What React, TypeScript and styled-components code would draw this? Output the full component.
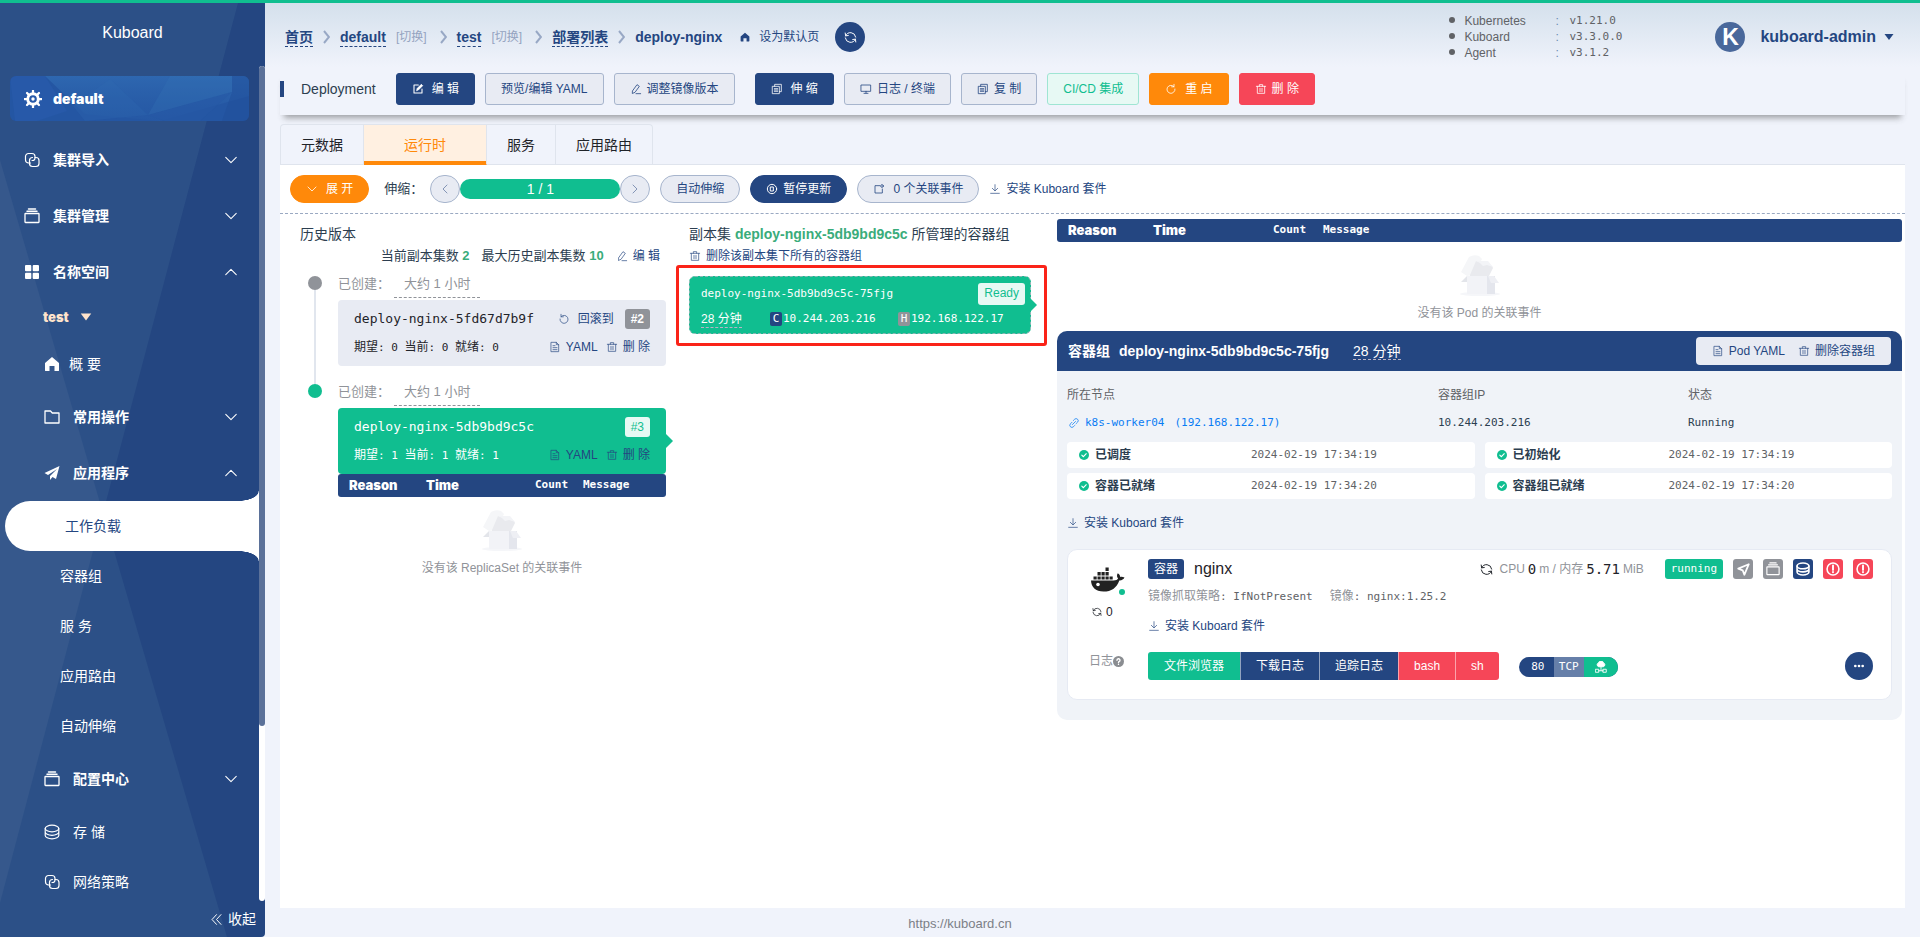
import React from 'react';
import styled, { createGlobalStyle, css } from 'styled-components';

const c = {
  navy: '#244681',
  green: '#10be90',
  orange: '#ff890a',
  red: '#f64658',
  gray: '#909399',
  page: '#f0f3fb',
  soft: '#e8ebf3',
  line: '#a7b5cd',
  text: '#2c3e50',
  dark: '#1f2329',
};
const sans = '"Liberation Sans", "Noto Sans CJK SC", sans-serif';
const mono = '"DejaVu Sans Mono", "Noto Sans CJK SC", monospace';
const heavy = '"Inter", "Noto Sans CJK SC", sans-serif';

const GlobalStyle = createGlobalStyle`
  *, *::before, *::after { box-sizing: border-box; }
  body { margin: 0; background: ${c.page}; color: ${c.text}; font: 12px/20px ${sans}; }
  button { font: inherit; color: inherit; cursor: pointer; }
  a { color: inherit; text-decoration: none; }
  ul, dl, dd, dt, h1, h2, h3, p { margin: 0; padding: 0; list-style: none; font: inherit; }
`;

/* ---------- icons ---------- */

const Glyph = styled.svg<{ $s?: number }>`
  flex: none;
  display: block;
  width: ${(p) => p.$s ?? 12}px;
  height: ${(p) => p.$s ?? 12}px;
  fill: none;
  stroke: currentColor;
  stroke-width: 1.2;
  stroke-linecap: round;
  stroke-linejoin: round;
`;

const shapes: Record<string, React.ReactNode> = {
  down: <path d="M2 5l6 6 6-6" />,
  up: <path d="M2 11l6-6 6 6" />,
  left: <path d="M11 2L5 8l6 6" />,
  right: <path d="M5 2l6 6-6 6" />,
  caret: <path d="M2 4h12l-6 8z" fill="currentColor" stroke="none" />,
  dleft: <path d="M8 2L2.500 8 8 14M13.500 2L8 8l5.500 6" />,
  link2: (
    <>
      <path d="M6.500 11H4.500A3 3 0 0 1 1.500 8V4.500a3 3 0 0 1 3-3H8a3 3 0 0 1 3 3v1.500a2.500 2.500 0 0 1-2.500 2.500H8" />
      <path d="M5.500 10.500V8.500a3 3 0 0 1 3-3M11 5.500h1a3 3 0 0 1 3 3v3a3 3 0 0 1-3 3H8.500a3 3 0 0 1-3-3v-1" />
    </>
  ),
  stack: (
    <>
      <path d="M4.500 1h7M3 3.200h10" strokeWidth="1.500" />
      <rect x="1" y="5.500" width="14" height="9" rx=".5" strokeWidth="1.300" />
    </>
  ),
  grid: (
    <g fill="currentColor" stroke="none">
      <rect x="1" y="1" width="6.300" height="6.300" rx="1" />
      <rect x="8.700" y="1" width="6.300" height="6.300" rx="1" />
      <rect x="1" y="8.700" width="6.300" height="6.300" rx="1" />
      <rect x="8.700" y="8.700" width="6.300" height="6.300" rx="1" />
    </g>
  ),
  home: (
    <path d="M8 1l7 6v7.500a.8.800 0 0 1-.8.500H10.500V10h-5v5H1.800a.8.800 0 0 1-.8-.5V7z" fill="currentColor" stroke="none" />
  ),
  folder: <path d="M1 2h5.500l1.800 2H15v10H1z" strokeWidth="1.300" />,
  plane: <path d="M15.500 1L.5 8l3.500 2L13 4 6 11v4l2.500-3 3.500 2z" fill="currentColor" stroke="none" />,
  coin: (
    <>
      <ellipse cx="8" cy="4.500" rx="6.800" ry="3.300" />
      <path d="M1.200 4.500V8c0 1.800 3 3.300 6.800 3.300s6.800-1.500 6.800-3.300V4.500M1.200 8v3.500c0 1.800 3 3.300 6.800 3.300s6.800-1.500 6.800-3.300V8" />
    </>
  ),
  edit: (
    <>
      <path d="M8.500 2H2v12h12V8" strokeWidth="1.600" />
      <path d="M6 10l1-3 6-6 2 2-6 6z" fill="currentColor" />
    </>
  ),
  pen: <path d="M3 10.500L9.500 1.500l3.500 2.500-6.500 9-3.500 1.500zM8 15h7" />,
  copy: (
    <>
      <path d="M4.500 4V1h10v11h-3" />
      <path d="M1.500 4h10v11h-10zM4 7.500h5M4 9.500h5M4 11.500h5" />
    </>
  ),
  monitor: <path d="M1 2h14v9.500H1zM8 11.500v2.500M5 14.500h6" />,
  redo: <path d="M12.500 4.500A6 6 0 1 0 14 8M12.500 1v3.700H9" />,
  undo: <path d="M3.500 4.500A6 6 0 1 1 2 8M3.500 1v3.700H7" />,
  trash: <path d="M1 4h14M5.500 4V1.500h5V4M2.500 4v10.500h11V4M6.500 7v5M9.500 7v5" />,
  sync: <path d="M2 6A6.500 6.500 0 0 1 14.400 7.500M14 10A6.500 6.500 0 0 1 1.600 8.500M1.500 2.500L2 6l3.300-.5M14.500 13.500L14 10l-3.300.5" />,
  pause: (
    <>
      <circle cx="8" cy="8" r="7" strokeWidth="1.500" />
      <path d="M6 5h4v6H6z" strokeWidth="1.500" />
    </>
  ),
  event: (
    <>
      <path d="M9 3H2v11h11V8" />
      <circle cx="12.500" cy="3.500" r="2" />
    </>
  ),
  download: <path d="M8 1.500v9M4 7l4 4 4-4M1.500 14.500h13" />,
  doc: <path d="M2.500 1h7.500l3.500 3.500V15h-11zM10 1v3.500h3.500M5 6h3M5 9h6M5 12h6" />,
  link: <path d="M7 4l2-2a3.300 3.300 0 0 1 4.700 4.700l-2.500 2.500M9 12l-2 2a3.300 3.300 0 0 1-4.700-4.700l2.500-2.500M5.500 10.500l5-5" />,
  check: (
    <>
      <circle cx="8" cy="8" r="7.500" fill={c.green} stroke="none" />
      <path d="M4.700 8.200l2.400 2.400 4.300-4.500" stroke="#fff" strokeWidth="1.700" />
    </>
  ),
  help: (
    <>
      <circle cx="8" cy="8" r="8" fill="#8a8d91" stroke="none" />
      <path d="M5.800 6.300a2.200 2.200 0 1 1 3 2c-.6.300-.8.700-.8 1.300M8 12v.2" stroke="#fff" strokeWidth="2" />
    </>
  ),
  nav: <path d="M14.500 1.500L1.500 7l5.500 2 2 5.500z" strokeWidth="2.200" />,
  warn: (
    <>
      <circle cx="8" cy="8" r="6.800" strokeWidth="1.800" />
      <path d="M8 4v5M8 11.500v.3" strokeWidth="2.200" />
    </>
  ),
  more: (
    <g fill="currentColor" stroke="none">
      <circle cx="2.500" cy="8" r="2" />
      <circle cx="8" cy="8" r="2" />
      <circle cx="13.500" cy="8" r="2" />
    </g>
  ),
  cloud: (
    <>
      <path d="M4.500 7.500a2.700 2.700 0 0 1 0-5 3.700 3.700 0 0 1 7 0 2.700 2.700 0 0 1 0 5z" fill="currentColor" />
      <path d="M8 7.500v5M5 13h6" />
      <rect x="1" y="11" width="4" height="4" />
      <rect x="11" y="11" width="4" height="4" />
    </>
  ),
  helm: (
    <>
      <circle cx="8" cy="8" r="4.700" strokeWidth="2.600" />
      <circle cx="8" cy="8" r="1.500" fill="currentColor" stroke="none" />
      <path d="M8 .5v2M8 13.500v2M.5 8h2M13.500 8h2M2.700 2.700l1.400 1.400M11.900 11.900l1.400 1.400M13.300 2.700l-1.400 1.400M4.100 11.900l-1.400 1.400" strokeWidth="2" />
    </>
  ),
};

const Icon = ({ n, s }: { n: string; s?: number }) => (
  <Glyph viewBox={s ? '0 0 16 16' : '-1 -1 18 18'} $s={s} aria-hidden="true">
    {shapes[n]}
  </Glyph>
);

/* ---------- shell ---------- */

const Shell = styled.div`
  display: grid;
  grid-template: 1fr 29px / 265px minmax(0, 1fr);
  min-height: 100vh;
  border-top: 3px solid ${c.green};
`;

const Sidebar = styled.aside`
  grid-area: 1 / 1 / 3 / 2;
  position: relative;
  z-index: 1;
  display: flex;
  flex-direction: column;
  height: calc(100vh - 3px);
  overflow: hidden;
  border-radius: 0 0 4px 0;
  background: ${c.navy};
  color: #fff;
  font-size: 14px;
`;

const Facets = styled.svg`
  position: absolute;
  inset: 0;
  z-index: -1;
  width: 100%;
  height: 100%;
`;

const Brand = styled.a`
  flex: none;
  height: 63px;
  text-align: center;
  font-size: 16px;
  line-height: 60px;
`;

const ScrollArea = styled.nav`
  flex: 1;
  min-height: 0;
  display: flex;
`;

const Menu = styled.ul`
  flex: 1;
  height: 100%;
  overflow: hidden;
  padding-top: 10px;
`;

const Track = styled.div`
  width: 6px;
  border-radius: 3px;
  background: #fff;
  &::before {
    content: '';
    display: block;
    height: 79%;
    border-radius: 3px;
    background: #5b7199;
  }
`;

const Cluster = styled.a`
  position: relative;
  display: flex;
  align-items: center;
  gap: 11px;
  height: 45px;
  margin: 0 10px 11px;
  padding-left: 14px;
  border-radius: 6px;
  overflow: hidden;
  background: #2456a3;
  font: 900 14px/20px ${heavy};
  svg { z-index: 1; }
  span { z-index: 1; }
`;

const ClusterArt = styled.svg`
  position: absolute;
  inset: 0;
  width: 100%;
  height: 100%;
`;

const MenuLink = styled.a<{ $lvl: 1 | 2 | 3; $group?: boolean; $tight?: boolean }>`
  display: flex;
  align-items: center;
  gap: ${(p) => (p.$tight ? 9 : 13)}px;
  height: ${(p) => (p.$group ? 56 : 50)}px;
  padding: 0 21px 0 ${(p) => (p.$lvl === 1 ? 24 : p.$lvl === 2 ? 44 : 60)}px;
  font-weight: ${(p) => (p.$group ? 700 : 400)};
  > span { flex: 1; }
`;

const Namespace = styled.a`
  display: flex;
  align-items: center;
  gap: 10px;
  height: 34px;
  margin-bottom: 5px;
  padding-left: 43px;
  color: #ffe4cc;
  font: 900 13px/20px ${heavy};
`;

const ActiveLink = styled.a`
  position: relative;
  display: flex;
  align-items: center;
  height: 50px;
  margin-left: 5px;
  padding-left: 60px;
  border-radius: 25px 0 0 25px;
  background: #fff;
  color: ${c.navy};
  &::before, &::after {
    content: '';
    position: absolute;
    right: 0;
    width: 20px;
    height: 10px;
  }
  &::before {
    bottom: 100%;
    background: radial-gradient(ellipse 20px 10px at 0 0, transparent 96%, #fff 100%);
  }
  &::after {
    top: 100%;
    background: radial-gradient(ellipse 20px 10px at 0 100%, transparent 96%, #fff 100%);
  }
`;

const Collapse = styled.button`
  flex: none;
  display: flex;
  align-items: center;
  justify-content: flex-end;
  gap: 5px;
  height: 36px;
  padding: 0 9px 0 0;
  border: 0;
  background: none;
`;

type Entry = { label: string; icon?: string; lvl: 1 | 2 | 3; group?: 'down' | 'up'; tight?: boolean };
const menuTop: Entry[] = [
  { label: '集群导入', icon: 'link2', lvl: 1, group: 'down' },
  { label: '集群管理', icon: 'stack', lvl: 1, group: 'down' },
  { label: '名称空间', icon: 'grid', lvl: 1, group: 'up' },
];
const menuMid: Entry[] = [
  { label: '概 要', icon: 'home', lvl: 2, tight: true },
  { label: '常用操作', icon: 'folder', lvl: 2, group: 'down' },
  { label: '应用程序', icon: 'plane', lvl: 2, group: 'up' },
];
const menuEnd: Entry[] = [
  { label: '容器组', lvl: 3 },
  { label: '服 务', lvl: 3 },
  { label: '应用路由', lvl: 3 },
  { label: '自动伸缩', lvl: 3 },
  { label: '配置中心', icon: 'stack', lvl: 2, group: 'down' },
  { label: '存 储', icon: 'coin', lvl: 2 },
  { label: '网络策略', icon: 'link2', lvl: 2 },
];

const Entries = ({ items }: { items: Entry[] }) => (
  <>
    {items.map((m) => (
      <li key={m.label}>
        <MenuLink href="#" $lvl={m.lvl} $group={!!m.group} $tight={m.tight}>
          {m.icon && <Icon n={m.icon} s={16} />}
          <span>{m.label}</span>
          {m.group && <Icon n={m.group} s={14} />}
        </MenuLink>
      </li>
    ))}
  </>
);

/* ---------- header ---------- */

const Main = styled.main`
  grid-area: 1 / 2;
  display: flex;
  flex-direction: column;
  min-width: 0;
  padding: 0 15px;
  background: linear-gradient(#d4e0ec, ${c.page} 64px);
`;

const Header = styled.header`
  display: flex;
  align-items: center;
  height: 68px;
  padding: 0 10px 0 5px;
  color: ${c.navy};
`;

const Crumbs = styled.nav`
  display: flex;
  align-items: center;
  gap: 10px;
  font-size: 14px;
  font-weight: 700;
  line-height: 18px;
`;

const SeparatorArt = styled.svg`
  flex: none;
  width: 7px;
  height: 14px;
  fill: none;
  stroke: #98a8c5;
  stroke-width: 2;
`;

const Separator = () => (
  <SeparatorArt viewBox="0 0 7 14" aria-hidden="true">
    <path d="M1 1l5 6-5 6" />
  </SeparatorArt>
);

const Crumb = styled.a`
  border-bottom: 1px dashed ${c.navy};
`;

const Switch = styled.a`
  margin-right: 3px;
  color: #94a3c0;
  font-size: 12px;
  font-weight: 400;
`;

const SetDefault = styled.a`
  display: flex;
  align-items: center;
  gap: 9px;
  margin: 0 6px 0 8px;
  font-size: 12px;
  font-weight: 400;
`;

const Round = styled.button<{ $size: number }>`
  flex: none;
  display: grid;
  place-items: center;
  width: ${(p) => p.$size}px;
  height: ${(p) => p.$size}px;
  padding: 0;
  border: 0;
  border-radius: 50%;
  background: ${c.navy};
  color: #fff;
`;

const MoreButton = styled(Round)`
  margin-left: auto;
`;

const Versions = styled.dl`
  display: grid;
  grid-template-columns: 12px 91px 14px 146px;
  margin-left: auto;
  color: #606266;
  line-height: 16px;
  dd { font: 11px/16px ${mono}; }
  dt { display: contents; }
  dt::before {
    content: '';
    width: 6px;
    height: 6px;
    margin-top: 4px;
    margin-left: -3px;
    border-radius: 50%;
    background: #606266;
  }
  dt::after { content: ':'; color: #6b8bb0; }
`;

const User = styled.button`
  display: flex;
  align-items: center;
  gap: 7px;
  padding: 0;
  border: 0;
  background: none;
  color: ${c.navy};
  font-size: 16px;
  font-weight: 700;
`;

const Avatar = styled.span`
  width: 30px;
  height: 30px;
  margin-right: 8px;
  border-radius: 50%;
  background: #49689b;
  color: #fff;
  font-size: 23px;
  line-height: 30px;
  text-align: center;
`;

/* ---------- toolbar ---------- */

const tones = {
  navy: css`background: ${c.navy}; border-color: ${c.navy}; color: #fff;`,
  soft: css`background: ${c.soft}; border-color: ${c.line}; color: ${c.navy};`,
  mint: css`background: #e7f9f4; border-color: #9fe5d3; color: ${c.green};`,
  orange: css`background: ${c.orange}; border-color: ${c.orange}; color: #fff;`,
  red: css`background: ${c.red}; border-color: ${c.red}; color: #fff;`,
};
type Tone = keyof typeof tones;

const Button = styled.button<{ $tone: Tone; $gap?: number; $pill?: boolean }>`
  display: inline-flex;
  align-items: center;
  justify-content: center;
  gap: ${(p) => p.$gap ?? 5}px;
  height: ${(p) => (p.$pill ? 28 : 32)}px;
  padding: 0 15px;
  border: 1px solid;
  border-radius: ${(p) => (p.$pill ? 14 : 3)}px;
  white-space: nowrap;
  ${(p) => tones[p.$tone]}
`;

const Toolbar = styled.div`
  display: flex;
  align-items: center;
  gap: 10px;
  height: 44px;
  padding-bottom: 8px;
  box-shadow: 0 7px 6px -4px rgba(60, 60, 60, 0.45);
`;

const Kind = styled.h1`
  margin-right: 10px;
  padding-left: 17px;
  border-left: 4px solid ${c.navy};
  font-size: 14px;
  line-height: 16px;
`;

const Group = styled.div`
  display: flex;
  gap: 10px;
  & + & { margin-left: 10px; }
`;

const Tabs = styled.div`
  display: flex;
  margin-top: 9px;
  border-bottom: 1px solid #dfe4ed;
`;

const Tab = styled.button<{ $on?: boolean }>`
  height: 40px;
  margin: 0;
  padding: 0 20px;
  border: 1px solid #dfe4ed;
  border-width: 1px 1px 0 0;
  background: none;
  color: ${c.dark};
  font-size: 14px;
  &:first-child { border-left-width: 1px; border-top-left-radius: 4px; }
  &:last-child { border-top-right-radius: 4px; }
  ${(p) =>
    p.$on &&
    css`
      padding: 0 40px;
      background: #fff0e1;
      color: ${c.orange};
      box-shadow: inset 0 -3px ${c.orange};
      border-bottom: 1px solid ${c.orange};
      height: 41px;
      margin-bottom: -1px;
    `}
`;

const Panel = styled.section`
  flex: 1;
  background: #fff;
`;

const ScaleBar = styled.div`
  display: flex;
  align-items: center;
  gap: 10px;
  height: 49px;
  padding: 0 10px;
  border-bottom: 1px dashed #9aa9c2;
`;

const ScaleLabel = styled.span`
  width: 36px;
  margin-left: 5px;
  color: ${c.text};
  font-size: 13px;
  white-space: nowrap;
`;

const Scaler = styled.div`
  display: flex;
  align-items: center;
`;

const Step = styled.button`
  display: grid;
  place-items: center;
  width: 30px;
  height: 28px;
  padding: 0;
  border: 1px solid ${c.line};
  border-radius: 15px;
  background: ${c.soft};
  color: #6a7fa6;
`;

const Progress = styled.div`
  width: 160px;
  border-radius: 10px;
  background: ${c.green};
  color: #fff;
  font-size: 14px;
  line-height: 20px;
  text-align: center;
`;

const TextLink = styled.a<{ $gap?: number }>`
  display: inline-flex;
  align-items: center;
  gap: ${(p) => p.$gap ?? 5}px;
  color: ${c.navy};
  font-size: 12px;
  white-space: nowrap;
  svg { opacity: 0.85; }
`;

const LinkLine = styled.div<{ $h: number }>`
  display: flex;
  height: ${(p) => p.$h}px;
`;

/* ---------- three columns ---------- */

const Columns = styled.div`
  display: grid;
  grid-template-columns: 366fr 345fr 845fr;
  gap: 23px;
  padding: 5px 3px 0 20px;
`;

const Column = styled.div<{ $inset?: boolean }>`
  min-width: 0;
  padding-right: ${(p) => (p.$inset ? 3 : 0)}px;
`;

const Title = styled.h2`
  padding-top: 4px;
  color: ${c.text};
  font-size: 14px;
  line-height: 22px;
  white-space: nowrap;
`;

const Strong = styled.b`
  color: #3aac7b;
`;

const Limits = styled.div`
  display: flex;
  justify-content: flex-end;
  gap: 12px;
  padding-right: 6px;
  font-size: 13px;
  line-height: 22px;
  white-space: nowrap;
`;

const Timeline = styled.ul`
  padding-left: 8px;
  margin-top: 4px;
`;

const Moment = styled.li<{ $on?: boolean }>`
  position: relative;
  padding: 0 0 9px 30px;
  &::before {
    content: '';
    position: absolute;
    left: 0;
    top: 5px;
    width: 14px;
    height: 14px;
    border-radius: 50%;
    background: ${(p) => (p.$on ? c.green : c.gray)};
  }
  &:not(:last-child)::after {
    content: '';
    position: absolute;
    left: 6px;
    top: 19px;
    bottom: -5px;
    width: 2px;
    background: #e1e6ee;
  }
`;

const Created = styled.div`
  display: flex;
  height: 29px;
  color: ${c.gray};
  font-size: 13px;
  line-height: 26px;
  span { width: 56px; }
  time {
    height: 27px;
    padding: 0 10px;
    border-bottom: 1px dashed ${c.gray};
  }
`;

const Arrow = styled.span`
  position: absolute;
  left: 100%;
  top: 50%;
  margin-top: -7px;
  border: 7px solid transparent;
  border-left-color: ${c.green};
  border-right-width: 0;
`;

const SetCard = styled.article<{ $on?: boolean }>`
  position: relative;
  display: grid;
  grid-template: 28px 28px / 1fr auto;
  height: 66px;
  margin-bottom: ${(p) => (p.$on ? 0 : 4)}px;
  padding: 5px 16px;
  align-items: center;
  border-radius: 4px;
  background: ${(p) => (p.$on ? c.green : c.soft)};
  color: ${(p) => (p.$on ? '#fff' : c.dark)};
  white-space: nowrap;
`;

const SetName = styled.h3`
  font: 13px/20px ${mono};
`;

const CountLine = styled.p`
  font: 11px/20px ${mono};
  span { font-size: 12px; }
`;

const Counts = ({ n }: { n: number }) => (
  <CountLine>
    <span>期望</span>: {n} <span>当前</span>: {n} <span>就绪</span>: {n}
  </CountLine>
);

const Actions = styled.div<{ $gap?: number }>`
  display: flex;
  justify-content: flex-end;
  align-items: center;
  gap: ${(p) => p.$gap ?? 8}px;
`;

const Tag = styled.span<{ $tone: 'gray' | 'light' | 'navy' | 'green'; $mono?: boolean }>`
  flex: none;
  padding: 0 6px;
  border-radius: 3px;
  font: ${(p) => (p.$mono ? `11px/20px ${mono}` : `12px/20px ${sans}`)};
  font-weight: ${(p) => (p.$tone === 'gray' ? 700 : 400)};
  color: ${(p) => (p.$tone === 'light' ? c.green : '#fff')};
  background: ${(p) => ({ gray: c.gray, light: '#e7f9f4', navy: c.navy, green: c.green })[p.$tone]};
`;

const EventTable = styled.table<{ $cols: [number, number, number] }>`
  width: 100%;
  height: 23px;
  table-layout: fixed;
  border-collapse: separate;
  border-spacing: 0;
  border-radius: 3px;
  background: ${c.navy};
  color: #fff;
  text-align: left;
  th { padding: 0; font: 700 11px/21px ${mono}; vertical-align: top; }
  th:nth-child(-n + 2) { font: 900 13px/23px ${heavy}; }
  th:nth-child(1) { width: ${(p) => p.$cols[0] + 11}px; padding-left: 11px; }
  th:nth-child(2) { width: ${(p) => p.$cols[1]}px; }
  th:nth-child(3) { width: ${(p) => p.$cols[2]}px; }
`;

const Empty = styled.figure`
  display: flex;
  flex-direction: column;
  align-items: center;
  gap: 6px;
  margin: 0;
  padding: 13px 0 8px;
  color: ${c.gray};
`;

const EventList = ({ cols, note }: { cols: [number, number, number]; note: string }) => (
  <>
    <EventTable $cols={cols}>
      <thead>
        <tr>
          <th>Reason</th>
          <th>Time</th>
          <th>Count</th>
          <th>Message</th>
        </tr>
      </thead>
    </EventTable>
    <Empty>
      <svg width="40" height="42" viewBox="0 0 40 42" aria-hidden="true">
        <ellipse cx="20" cy="39" rx="20" ry="2" fill="#f5f6f9" />
        <path d="M1 17L9 2q5-3 10-1l3 3-8 16-7 1z" fill="#f5f6f8" />
        <path d="M10 20l6-14 16 5 1 2-4 8H10z" fill="#e9eaee" />
        <path d="M16 6l12 0 5 6-6-2-4 1-3-3z" fill="#f3f4f7" />
        <path d="M7 21H28V39H7z" fill="#f2f3f7" />
        <path d="M27 21h8v18h-8z" fill="#e4e6ed" />
        <path d="M28 21h6l5 7h-8z" fill="#eeeff4" />
        <path d="M7 21v6H1z" fill="#e3e5ea" />
      </svg>
      <figcaption>{note}</figcaption>
    </Empty>
  </>
);

const PodCard = styled.article`
  position: relative;
  height: 58px;
  margin: 9px 0 12px;
  padding: 6px 5px 0 11px;
  border: 1px dashed #8db5b4;
  border-radius: 6px;
  background: ${c.green};
  color: #fff;
  white-space: nowrap;
`;

const Highlight = styled.div`
  position: absolute;
  inset: -12px -17px -13px -14px;
  border: 3px solid #fa2318;
  border-radius: 3px;
  pointer-events: none;
`;

const PodTop = styled.div`
  display: flex;
  justify-content: space-between;
  font: 11px/22px ${mono};
`;

const PodMeta = styled.div`
  display: grid;
  grid-template-columns: 69px 128px auto;
  align-items: center;
  height: 28px;
  font-size: 12px;
`;

const Age = styled.time<{ $big?: boolean }>`
  justify-self: start;
  border-bottom: 1px dashed #b9b3c6;
  font-size: ${(p) => (p.$big ? 14 : 12)}px;
  line-height: 16px;
`;

const Address = styled.span`
  display: flex;
  align-items: center;
  gap: 1px;
  font: 11px/16px ${mono};
`;

const Letter = styled.i<{ $navy?: boolean }>`
  width: 12px;
  border-radius: 2px;
  background: ${(p) => (p.$navy ? c.navy : c.gray)};
  font-style: normal;
  line-height: 14px;
  text-align: center;
`;

/* ---------- pod details ---------- */

const Pod = styled.section`
  border-radius: 10px;
  overflow: hidden;
  background: #f0f3f8;
`;

const PodHead = styled.header`
  display: flex;
  align-items: center;
  height: 40px;
  padding: 0 11px;
  background: ${c.navy};
  color: #fff;
  font-size: 14px;
  h2 { display: flex; gap: 9px; margin-right: 24px; font-weight: 700; }
`;

const HeadActions = styled.div`
  display: flex;
  gap: 13px;
  height: 28px;
  margin-left: auto;
  padding: 0 16px;
  border-radius: 4px;
  background: ${c.soft};
`;

const PodBody = styled.div`
  padding: 10px 10px 20px 10px;
`;

const Facts = styled.dl`
  display: grid;
  grid-template-columns: 371fr 250fr 204fr;
  margin-bottom: 5px;
  line-height: 28px;
  dt { color: #606266; }
  dd { grid-row: 2; font: 11px/28px ${mono}; }
`;

const NodeLink = styled.a`
  display: flex;
  align-items: center;
  gap: 6px;
  padding-left: 2px;
  color: #0a7cf4;
  span + span { margin-left: 4px; }
`;

const Conditions = styled.ul`
  display: grid;
  grid-template-columns: 1fr 1fr;
  gap: 5px 10px;
  margin-bottom: 14px;
`;

const Condition = styled.li`
  display: grid;
  grid-template-columns: 17px 156px 1fr;
  align-items: center;
  height: 26px;
  padding-left: 11px;
  border-radius: 4px;
  background: #fff;
  time { color: #606266; font: 11px/20px ${mono}; }
`;

const Container = styled.article`
  display: grid;
  grid-template-columns: 80px minmax(0, 1fr);
  height: 151px;
  margin-top: 16px;
  padding: 9px 18px 0 0;
  border: 1px solid #e6eaf3;
  border-radius: 10px;
  background: #fff;
`;

const Side = styled.div`
  padding-left: 21px;
  color: ${c.gray};
`;

const DockerMark = styled.div`
  position: relative;
  width: 36px;
  height: 43px;
  padding: 8px 0 0 2px;
  &::after {
    content: '';
    position: absolute;
    right: 0;
    top: 30px;
    width: 6px;
    height: 6px;
    border-radius: 50%;
    background: ${c.green};
  }
`;

const Restarts = styled.div`
  display: flex;
  align-items: center;
  gap: 4px;
  padding-left: 3px;
  color: ${c.dark};
`;

const LogLabel = styled.div`
  display: flex;
  align-items: center;
  margin-top: 29px;
  white-space: nowrap;
`;

const Row = styled.div<{ $h: number }>`
  display: flex;
  align-items: center;
  gap: 10px;
  height: ${(p) => p.$h}px;
  white-space: nowrap;
`;

const Name = styled.h3`
  color: ${c.dark};
  font-size: 16px;
`;

const Usage = styled.span`
  display: flex;
  align-items: center;
  gap: 3px;
  margin-right: 11px;
  margin-left: auto;
  color: ${c.gray};
  svg { margin-right: 3px; color: ${c.dark}; }
  b { color: ${c.dark}; font: 14px/20px ${mono}; }
`;

const Square = styled.button<{ $bg: string }>`
  display: grid;
  place-items: center;
  width: 20px;
  height: 20px;
  padding: 0;
  border: 0;
  border-radius: 3px;
  background: ${(p) => p.$bg};
  color: #fff;
  svg { stroke-width: 1.8; }
`;

const Spec = styled.span`
  margin-right: 7px;
  color: ${c.gray};
  code { color: #606266; font: 11px/20px ${mono}; }
`;

const ButtonGroup = styled.div`
  display: flex;
  height: 28px;
  border-radius: 3px;
  overflow: hidden;
`;

const Segment = styled.button<{ $bg: string }>`
  padding: 0 15px;
  border: 0;
  background: ${(p) => p.$bg};
  color: #fff;
  &:first-child { padding: 0 16px; }
  & + & { border-left: 1px solid rgba(255, 255, 255, 0.5); }
`;

const Port = styled.button`
  display: flex;
  height: 20px;
  margin: 2px 0 0 10px;
  padding: 0;
  border: 0;
  border-radius: 10px;
  overflow: hidden;
  background: ${c.navy};
  color: #fff;
  font: 11px/20px ${mono};
  span { width: 35px; padding-left: 3px; text-align: center; }
  i { width: 30px; background: #667fa9; font-style: normal; }
  em { display: grid; place-items: center; width: 34px; height: 20px; background: ${c.green}; }
`;

const Footer = styled.footer`
  grid-area: 2 / 1 / 3 / 3;
  padding-top: 6px;
  color: #7c8087;
  font-size: 13px;
  line-height: 20px;
  text-align: center;
`;

export default function App() {
  return (
    <>
      <GlobalStyle />
      <Shell>
        <Sidebar>
          <Facets viewBox="0 0 265 934" preserveAspectRatio="none" aria-hidden="true">
            <path d="M0 0H238L103 510 227 934H0z" fill="#2c5087" />
            <path d="M0 157L103 510 0 900z" fill="#36588c" />
          </Facets>
          <Brand href="#">Kuboard</Brand>
          <ScrollArea aria-label="主菜单">
            <Menu>
              <li>
                <Cluster href="#">
                  <ClusterArt viewBox="0 0 239 45" preserveAspectRatio="none" aria-hidden="true">
                    <defs>
                      <linearGradient id="sheen" x1="0" y1="0" x2="0" y2="1">
                        <stop offset="0" stopColor="#3a7cc0" stopOpacity=".45" />
                        <stop offset="1" stopColor="#2d64ad" stopOpacity=".15" />
                      </linearGradient>
                    </defs>
                    <path d="M35 0H239V20L150 45 75 38z" fill="url(#sheen)" />
                    <path d="M100 3l38 36L75 45l-12-15z" fill="#2f6cb3" fillOpacity=".25" />
                    <path d="M160 0h62v16L138 39z" fill="#3574b5" fillOpacity=".3" />
                    <path d="M0 0h35l22 35-30 10H5z" fill="#2a5cb0" fillOpacity=".5" />
                    <path d="M222 0v16l-10 29h27V0z" fill="#1f4d99" fillOpacity=".5" />
                    <path d="M138 39l84-23-32 29h-35z" fill="#2558a6" fillOpacity=".5" />
                  </ClusterArt>
                  <Icon n="helm" s={18} />
                  <span>default</span>
                </Cluster>
              </li>
              <Entries items={menuTop} />
              <li>
                <Namespace href="#">
                  test <Icon n="caret" s={14} />
                </Namespace>
              </li>
              <Entries items={menuMid} />
              <li>
                <ActiveLink href="#" aria-current="page">工作负载</ActiveLink>
              </li>
              <Entries items={menuEnd} />
            </Menu>
            <Track />
          </ScrollArea>
          <Collapse>
            <Icon n="dleft" s={13} />
            收起
          </Collapse>
        </Sidebar>

        <Main>
          <Header>
            <Crumbs aria-label="位置">
              <Crumb href="#">首页</Crumb>
              <Separator />
              <Crumb href="#">default</Crumb>
              <Switch href="#">[切换]</Switch>
              <Separator />
              <Crumb href="#">test</Crumb>
              <Switch href="#">[切换]</Switch>
              <Separator />
              <Crumb href="#">部署列表</Crumb>
              <Separator />
              <span>deploy-nginx</span>
              <SetDefault href="#">
                <Icon n="home" s={10} />
                设为默认页
              </SetDefault>
              <Round $size={30} aria-label="刷新">
                <Icon n="sync" s={13} />
              </Round>
            </Crumbs>
            <Versions>
              <dt><span>Kubernetes</span></dt>
              <dd>v1.21.0</dd>
              <dt><span>Kuboard</span></dt>
              <dd>v3.3.0.0</dd>
              <dt><span>Agent</span></dt>
              <dd>v3.1.2</dd>
            </Versions>
            <User>
              <Avatar>K</Avatar>
              kuboard-admin
              <Icon n="caret" s={12} />
            </User>
          </Header>

          <Toolbar>
            <Kind>Deployment</Kind>
            <Group>
              <Button $tone="navy" $gap={8}><Icon n="edit" />编 辑</Button>
              <Button $tone="soft">预览/编辑 YAML</Button>
              <Button $tone="soft"><Icon n="pen" />调整镜像版本</Button>
            </Group>
            <Group>
              <Button $tone="navy" $gap={8}><Icon n="copy" />伸 缩</Button>
              <Button $tone="soft"><Icon n="monitor" />日志 / 终端</Button>
              <Button $tone="soft"><Icon n="copy" />复 制</Button>
              <Button $tone="mint">CI/CD 集成</Button>
              <Button $tone="orange" $gap={8}><Icon n="redo" />重 启</Button>
              <Button $tone="red"><Icon n="trash" />删 除</Button>
            </Group>
          </Toolbar>

          <Tabs role="tablist">
            <Tab role="tab">元数据</Tab>
            <Tab role="tab" $on aria-selected="true">运行时</Tab>
            <Tab role="tab">服务</Tab>
            <Tab role="tab">应用路由</Tab>
          </Tabs>

          <Panel>
            <ScaleBar>
              <Button $tone="orange" $pill $gap={8}><Icon n="down" />展 开</Button>
              <ScaleLabel>伸缩：</ScaleLabel>
              <Scaler>
                <Step aria-label="减少"><Icon n="left" /></Step>
                <Progress>1 / 1</Progress>
                <Step aria-label="增加"><Icon n="right" /></Step>
              </Scaler>
              <Button $tone="soft" $pill>自动伸缩</Button>
              <Button $tone="navy" $pill><Icon n="pause" />暂停更新</Button>
              <Button $tone="soft" $pill $gap={8}><Icon n="event" />0 个关联事件</Button>
              <TextLink href="#"><Icon n="download" />安装 Kuboard 套件</TextLink>
            </ScaleBar>

            <Columns>
              <Column>
                <Title>历史版本</Title>
                <Limits>
                  <span>当前副本集数 <Strong>2</Strong></span>
                  <span>最大历史副本集数 <Strong>10</Strong></span>
                  <TextLink href="#"><Icon n="pen" />编 辑</TextLink>
                </Limits>
                <Timeline>
                  <Moment>
                    <Created><span>已创建：</span><time>大约 1 小时</time></Created>
                    <SetCard>
                      <SetName>deploy-nginx-5fd67d7b9f</SetName>
                      <Actions $gap={11}>
                        <TextLink href="#" $gap={8}><Icon n="undo" />回滚到</TextLink>
                        <Tag $tone="gray">#2</Tag>
                      </Actions>
                      <Counts n={0} />
                      <Actions>
                        <TextLink href="#"><Icon n="doc" />YAML</TextLink>
                        <TextLink href="#"><Icon n="trash" />删 除</TextLink>
                      </Actions>
                    </SetCard>
                  </Moment>
                  <Moment $on>
                    <Created><span>已创建：</span><time>大约 1 小时</time></Created>
                    <SetCard $on>
                      <SetName>deploy-nginx-5db9bd9c5c</SetName>
                      <Actions>
                        <Tag $tone="light">#3</Tag>
                      </Actions>
                      <Counts n={1} />
                      <Actions>
                        <TextLink href="#"><Icon n="doc" />YAML</TextLink>
                        <TextLink href="#"><Icon n="trash" />删 除</TextLink>
                      </Actions>
                      <Arrow />
                    </SetCard>
                    <EventList cols={[77, 109, 48]} note="没有该 ReplicaSet 的关联事件" />
                  </Moment>
                </Timeline>
              </Column>

              <Column $inset>
                <Title>副本集 <Strong>deploy-nginx-5db9bd9c5c</Strong> 所管理的容器组</Title>
                <LinkLine $h={22}>
                  <TextLink href="#"><Icon n="trash" />删除该副本集下所有的容器组</TextLink>
                </LinkLine>
                <PodCard>
                  <PodTop>
                    deploy-nginx-5db9bd9c5c-75fjg
                    <Tag $tone="light">Ready</Tag>
                  </PodTop>
                  <PodMeta>
                    <Age>28 分钟</Age>
                    <Address><Letter $navy>C</Letter>10.244.203.216</Address>
                    <Address><Letter>H</Letter>192.168.122.17</Address>
                  </PodMeta>
                  <Arrow />
                  <Highlight />
                </PodCard>
              </Column>

              <Column>
                <EventList cols={[85, 120, 50]} note="没有该 Pod 的关联事件" />
                <Pod>
                  <PodHead>
                    <h2><span>容器组</span><span>deploy-nginx-5db9bd9c5c-75fjg</span></h2>
                    <Age $big>28 分钟</Age>
                    <HeadActions>
                      <TextLink href="#"><Icon n="doc" />Pod YAML</TextLink>
                      <TextLink href="#"><Icon n="trash" />删除容器组</TextLink>
                    </HeadActions>
                  </PodHead>
                  <PodBody>
                    <Facts>
                      <dt>所在节点</dt>
                      <dd>
                        <NodeLink href="#">
                          <Icon n="link" s={10} />
                          <span>k8s-worker04</span>
                          <span>(192.168.122.17)</span>
                        </NodeLink>
                      </dd>
                      <dt>容器组IP</dt>
                      <dd>10.244.203.216</dd>
                      <dt>状态</dt>
                      <dd>Running</dd>
                    </Facts>
                    <Conditions>
                      <Condition><Icon n="check" /><b>已调度</b><time>2024-02-19 17:34:19</time></Condition>
                      <Condition><Icon n="check" /><b>已初始化</b><time>2024-02-19 17:34:19</time></Condition>
                      <Condition><Icon n="check" /><b>容器已就绪</b><time>2024-02-19 17:34:20</time></Condition>
                      <Condition><Icon n="check" /><b>容器组已就绪</b><time>2024-02-19 17:34:20</time></Condition>
                    </Conditions>
                    <LinkLine $h={20}>
                      <TextLink href="#"><Icon n="download" />安装 Kuboard 套件</TextLink>
                    </LinkLine>

                    <Container>
                      <Side>
                        <DockerMark>
                          <svg width="34" height="25" viewBox="0 0 34 25" fill="#222" aria-hidden="true">
                            <path d="M2.500 9.500h3.200v3H2.500zM6.500 9.500h3.200v3H6.500zM10.500 9.500h3.200v3h-3.200zM14.500 9.500h3.200v3h-3.200zM18.500 9.500h3.200v3h-3.200zM6.500 5h3.200v3.500H6.500zM10.500 5h3.200v3.500h-3.200zM14.500 5h3.200v3.500h-3.200zM14.500.5h3.200V4h-3.200z" />
                            <path d="M0 13.500h22.500c2.500 0 4-.7 4.600-2-1.400-1.500-1.400-3.500-.3-5.200 1.400.8 2.300 2.100 2.400 3.600 1.300-.3 3-.1 4.300.7-.9 2-2.700 2.900-5.200 2.800C25.500 21 20.500 24.500 12.500 24.500 4.500 24.500.2 20 0 13.500z" />
                            <circle cx="7" cy="17.500" r="1.800" fill="#fff" />
                          </svg>
                        </DockerMark>
                        <Restarts><Icon n="sync" s={10} />0</Restarts>
                        <LogLabel>日志<Icon n="help" s={11} /></LogLabel>
                      </Side>
                      <div>
                        <Row $h={20}>
                          <Tag $tone="navy">容器</Tag>
                          <Name>nginx</Name>
                          <Usage>
                            <Icon n="sync" s={13} />
                            CPU <b>0</b> m / 内存 <b>5.71</b> MiB
                          </Usage>
                          <Tag $tone="green" $mono>running</Tag>
                          <Square $bg={c.gray} aria-label="就绪探针"><Icon n="nav" s={13} /></Square>
                          <Square $bg={c.gray} aria-label="资源"><Icon n="stack" s={14} /></Square>
                          <Square $bg={c.navy} aria-label="存储"><Icon n="coin" s={14} /></Square>
                          <Square $bg={c.red} aria-label="告警"><Icon n="warn" s={14} /></Square>
                          <Square $bg={c.red} aria-label="告警"><Icon n="warn" s={14} /></Square>
                        </Row>
                        <Row $h={34}>
                          <Spec>镜像抓取策略<code>: IfNotPresent</code></Spec>
                          <Spec>镜像<code>: nginx:1.25.2</code></Spec>
                        </Row>
                        <Row $h={26}>
                          <TextLink href="#"><Icon n="download" />安装 Kuboard 套件</TextLink>
                        </Row>
                        <Row $h={54}>
                          <ButtonGroup>
                            <Segment $bg={c.green}>文件浏览器</Segment>
                            <Segment $bg={c.navy}>下载日志</Segment>
                            <Segment $bg={c.navy}>追踪日志</Segment>
                            <Segment $bg={c.red}>bash</Segment>
                            <Segment $bg={c.red}>sh</Segment>
                          </ButtonGroup>
                          <Port>
                            <span>80</span>
                            <i>TCP</i>
                            <em><Icon n="cloud" s={12} /></em>
                          </Port>
                          <MoreButton $size={28} aria-label="更多"><Icon n="more" /></MoreButton>
                        </Row>
                      </div>
                    </Container>
                  </PodBody>
                </Pod>
              </Column>
            </Columns>
          </Panel>
        </Main>

        <Footer><a href="#">https://kuboard.cn</a></Footer>
      </Shell>
    </>
  );
}
